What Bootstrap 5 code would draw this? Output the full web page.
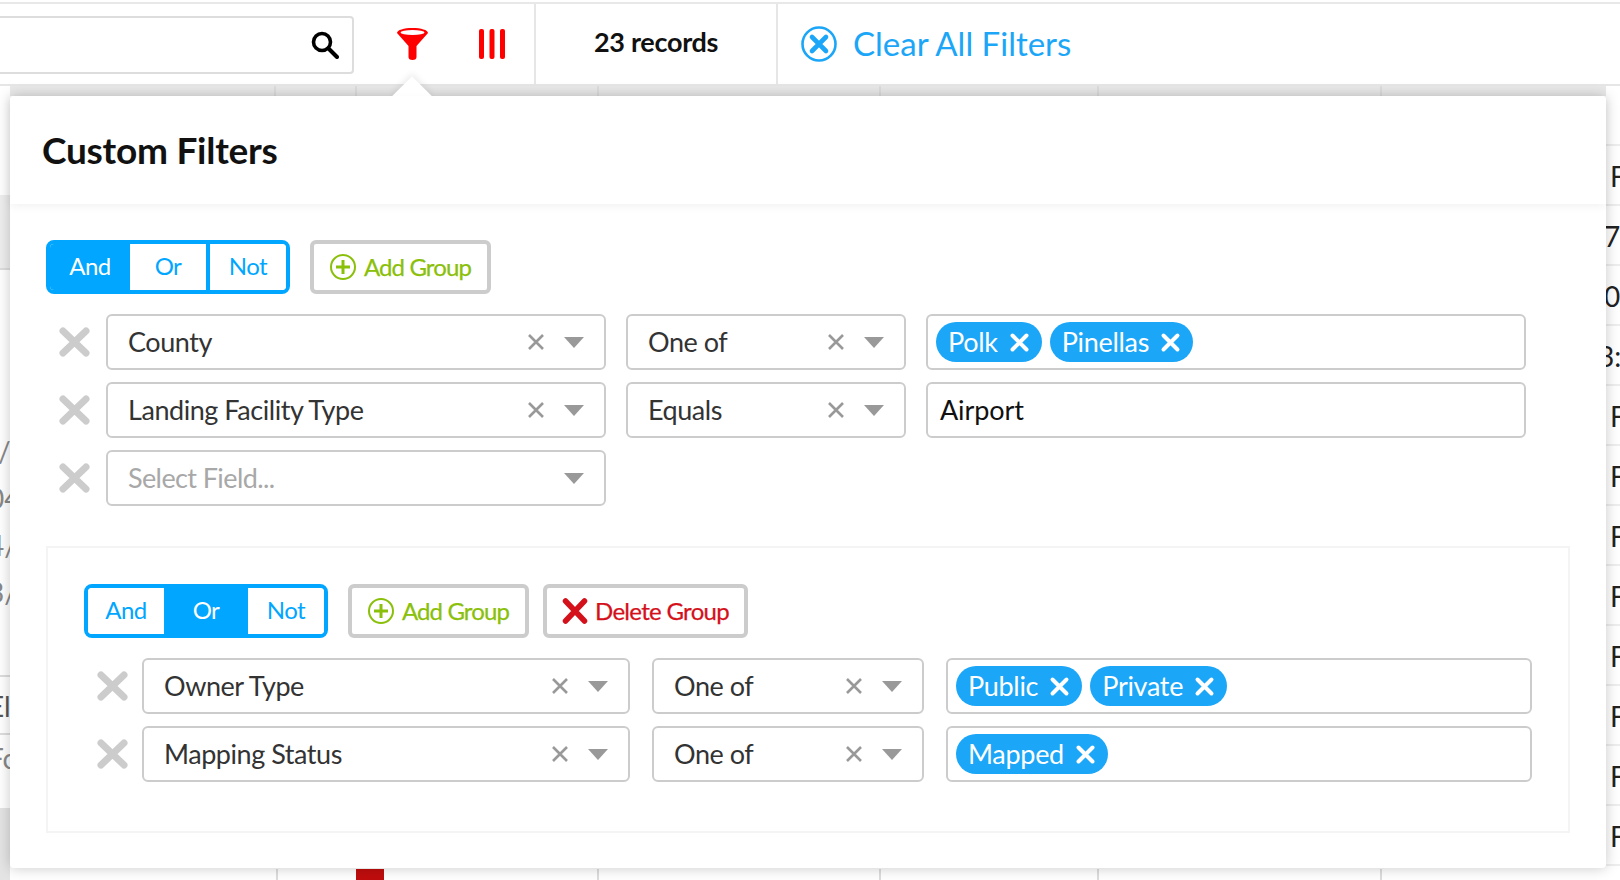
<!DOCTYPE html>
<html lang="en">
<head>
  <meta charset="UTF-8">
  <title>Custom Filters</title>
  <link href="https://cdn.jsdelivr.net/npm/bootstrap@5.3.0/dist/css/bootstrap.min.css" rel="stylesheet">
  <style>
    html, body { height: 880px; overflow: hidden; }
    body { position: relative; font-family: "Lato", "Liberation Sans", sans-serif; background: #fff; color: #333; }

    .top-rule { border-top: 2px solid #e8e8e8; margin-top: 2px; height: 2px; }
    .toolbar { height: 82px; border-bottom: 2px solid #e6e6e6; }
    .search-box { width: 354px; height: 58px; margin-top: 12px; border: 2px solid #ddd; border-left: 0; border-radius: 0 4px 4px 0; padding-right: 13px; }
    .tool-slot { width: 180px; height: 80px; padding-left: 43px; gap: 51px; }
    .rec-cell { width: 244px; height: 80px; border-left: 2px solid #e6e6e6; border-right: 2px solid #e6e6e6; padding-left: 58px; padding-bottom: 4px; font-size: 27px; font-weight: 700; color: #111; letter-spacing: -.3px; }
    .clear-link { color: #1ba6f8; font-size: 33px; padding-left: 23px; gap: 16px; }

    .behind { height: 794px; overflow: hidden; color: #888; font-size: 28px; }
    .edge-left { width: 10px; flex: none; overflow: hidden; }
    .edge-right { width: 14px; flex: none; overflow: hidden; color: #222; }
    .edge-right div { height: 60px; line-height: 60px; border-bottom: 2px solid #eee; white-space: nowrap; padding-left: 4px; }
    .edge-right .cut { display: block; margin-left: -6px; }
    .edge-right .cut-more { margin-left: -12px; }
    .left-txt { height: 47px; line-height: 47px; white-space: nowrap; }
    .left-txt span { display: block; margin-left: -12px; }
    .left-gap { border-bottom: 2px solid #ddd; background: #eee; }
    .left-line { border-bottom: 2px solid #ddd; height: 58px; line-height: 58px; white-space: nowrap; }
    .left-line span { display: block; margin-left: -12px; }
    .left-end { height: 46px; line-height: 46px; white-space: nowrap; }
    .left-end span { display: block; margin-left: -12px; }
    .mid-col { flex: 1 1 auto; }
    .tick-band { height: 10px; background: #e9e9e9; }
    .tick-foot { height: 11px; }
    .tick { width: 2px; background: #ddd; position: absolute; height: 100%; }
    .tick-row { position: relative; }
    .red-block { position: absolute; left: 346px; top: 0; width: 28px; height: 11px; background: #c00d0d; }

    .filter-panel { position: absolute; left: 10px; top: 96px; width: 1596px; height: 772px; background: #fff; border-radius: 4px; box-shadow: 0 0 14px rgba(0,0,0,.22); }
    .panel-arrow { position: absolute; left: 388px; top: -14px; width: 28px; height: 28px; background: #fff; transform: rotate(45deg); box-shadow: -2px -2px 6px rgba(0,0,0,.08); }
    .panel-head { position: relative; height: 108px; padding: 0 32px; background: #fff; box-shadow: 0 3px 8px rgba(0,0,0,.05); border-radius: 4px 4px 0 0; }
    .panel-head h2 { margin: 0; font-family: "Lato", sans-serif; font-size: 37px; font-weight: 700; color: #111; letter-spacing: -.25px; }
    .panel-body { padding: 36px; }

    .logic-group { width: 244px; height: 54px; border: 4px solid #00a6ff; border-radius: 8px; overflow: hidden; }
    .logic-group .btn { border: 0; border-radius: 0; padding: 0 0 2px; font-size: 24px; letter-spacing: -.5px; color: #00a6ff; background: #fff; flex: none; }
    .logic-group .btn.on { background: #00a6ff; color: #fff; }
    .logic-group .btn.sep { border-left: 4px solid #00a6ff; }
    .w-76 { width: 76px; }
    .w-80 { width: 80px; }
    .w-84 { width: 84px; }
    .tool-btn { height: 54px; border: 4px solid #ccc; border-radius: 6px; font-size: 24px; background: #fff; padding: 0 0 0 16px; gap: 8px; letter-spacing: -.9px; white-space: nowrap; flex: none; -webkit-text-stroke: .25px currentColor; }
    .tool-btn svg { flex: none; }
    .tool-add, .tool-add:hover { width: 181px; color: #8abf0a; background: #fff; border-color: #ccc; }
    .tool-del, .tool-del:hover { width: 205px; color: #d4111b; background: #fff; border-color: #ccc; gap: 7px; padding-left: 15px; letter-spacing: -.7px; }

    .filter-row { height: 56px; margin-bottom: 12px; }
    .row-x { flex: none; width: 31px; }
    .fld { height: 56px; border: 2px solid #ccc; border-radius: 6px; padding-left: 20px; padding-right: 20px; font-size: 27px; letter-spacing: -.45px; background: #fff; white-space: nowrap; }
    .fld .lbl { flex: 1 1 auto; }
    .fld .ph { color: #a8a8a8; letter-spacing: -.6px; }
    .caret-ico { width: 20px; height: 11px; flex: none; margin-left: 19px; }
    .clr-ico { width: 18px; height: 18px; flex: none; }
    .val { height: 56px; border: 2px solid #ccc; border-radius: 6px; padding: 0 8px; gap: 8px; font-size: 27px; color: #111; background: #fff; }
    .val.txt { padding-left: 12px; letter-spacing: -.1px; }
    .chip { height: 40px; background: #1ba6f8; color: #fff; border-radius: 20px; padding: 0 12px 0 12px; font-size: 27px; gap: 11px; letter-spacing: -.3px; }

    .w-f1 { width: 500px; flex: none; }
    .w-o1 { width: 280px; flex: none; }
    .w-v1 { width: 600px; flex: none; }
    .w-f2 { width: 488px; flex: none; }
    .w-o2 { width: 272px; flex: none; }
    .w-v2 { width: 586px; flex: none; }

    .group-box { margin-top: 40px; border: 2px solid #f4f4f4; padding: 36px 36px 37px; width: 1524px; }
    .top-rows { margin-top: 20px; padding-left: 13px; }
    .gap-fld { gap: 20px; }
    .gap-btn { gap: 14px; }
    .gap-x { gap: 16px; }
    .gap-x2 { gap: 14px; }
    .gap-fld2 { gap: 22px; }
  </style>
</head>
<body>
  <svg width="0" height="0" class="d-block">
    <defs>
      <symbol id="i-caret" viewBox="0 0 20 11"><path d="M0 0H20L10 11Z" fill="#999"/></symbol>
      <symbol id="i-clr" viewBox="0 0 18 18"><path d="M2 2L16 16M16 2L2 16" stroke="#999" stroke-width="2.6" fill="none"/></symbol>
      <symbol id="i-rowx" viewBox="0 0 31 30"><path d="M4 4L27 26M27 4L4 26" stroke="#ccc" stroke-width="7" stroke-linecap="round" fill="none"/></symbol>
      <symbol id="i-chipx" viewBox="0 0 18 18"><path d="M3 3L15 15M15 3L3 15" stroke="#fff" stroke-width="3.4" stroke-linecap="round" fill="none"/></symbol>
      <symbol id="i-plus" viewBox="0 0 26 26"><circle cx="13" cy="13" r="12" fill="none" stroke="#8abf0a" stroke-width="2"/><path d="M13 6V20M6 13H20" stroke="#8abf0a" stroke-width="3"/></symbol>
    </defs>
  </svg>

  <div class="top-rule"></div>
  <div class="toolbar d-flex">
    <div class="search-box d-flex align-items-center justify-content-end">
      <svg width="28" height="28" viewBox="0 0 28 28"><circle cx="11" cy="11" r="8.5" fill="none" stroke="#000" stroke-width="3.6"/><path d="M17.5 17.5L26 26" stroke="#000" stroke-width="4" stroke-linecap="round"/></svg>
    </div>
    <div class="tool-slot d-flex align-items-center">
      <svg width="31" height="32" viewBox="0 0 31 32"><path d="M0 5C0 2 7 0 15.5 0S31 2 31 5L19.5 18V29Q19.5 32 15.5 32T11.5 29V18Z" fill="#f00"/><ellipse cx="15.5" cy="4.5" rx="12" ry="2.4" fill="#fff"/></svg>
      <svg width="26" height="30" viewBox="0 0 26 30"><rect x="0" y="0" width="5" height="30" rx="2" fill="#f00"/><rect x="10.5" y="0" width="5" height="30" rx="2" fill="#f00"/><rect x="21" y="0" width="5" height="30" rx="2" fill="#f00"/></svg>
    </div>
    <div class="rec-cell d-flex align-items-center">23 records</div>
    <a class="clear-link d-flex align-items-center text-decoration-none" href="#">
      <svg width="36" height="36" viewBox="0 0 36 36"><circle cx="18" cy="18" r="16.5" fill="none" stroke="#1ba6f8" stroke-width="2.6"/><path d="M11 11L25 25M25 11L11 25" stroke="#1ba6f8" stroke-width="4.6" stroke-linecap="round"/></svg>
      <span>Clear All Filters</span>
    </a>
  </div>

  <div class="behind d-flex">
    <div class="edge-left">
      <div style="height:109px"></div>
      <div class="left-gap" style="height:75px"></div>
      <div style="height:158px"></div>
      <div class="left-txt"><span style="margin-left:-2px">/</span></div>
      <div class="left-txt"><span>04</span></div>
      <div class="left-txt"><span>4/</span></div>
      <div class="left-txt"><span>3/</span></div>
      <div style="height:61px;border-bottom:2px solid #ddd"></div>
      <div class="left-line"><span style="color:#555">El</span></div>
      <div class="left-end"><span>Fc</span></div>
      <div style="height:27px"></div>
      <div style="height:72px;background:#e4e4e4"></div>
    </div>
    <div class="mid-col d-flex flex-column justify-content-between">
      <div class="tick-band tick-row">
        <div class="tick" style="left:264px"></div>
        <div class="tick" style="left:345px"></div>
        <div class="tick" style="left:587px"></div>
        <div class="tick" style="left:869px"></div>
        <div class="tick" style="left:1087px"></div>
        <div class="tick" style="left:1370px"></div>
      </div>
      <div class="tick-foot tick-row">
        <div class="tick" style="left:266px"></div>
        <div class="red-block"></div>
        <div class="tick" style="left:587px"></div>
        <div class="tick" style="left:869px"></div>
        <div class="tick" style="left:1087px"></div>
        <div class="tick" style="left:1370px"></div>
      </div>
    </div>
    <div class="edge-right">
      <div></div>
      <div>F</div>
      <div><span class="cut">7</span></div>
      <div><span class="cut">0</span></div>
      <div><span class="cut cut-more">3:</span></div>
      <div>F</div>
      <div>F</div>
      <div>F</div>
      <div>F</div>
      <div>F</div>
      <div>F</div>
      <div>F</div>
      <div>F</div>
      <div>F</div>
    </div>
  </div>

  <div class="filter-panel">
    <div class="panel-arrow"></div>
    <div class="panel-head d-flex align-items-center"><h2>Custom Filters</h2></div>
    <div class="panel-body">

      <div class="d-flex gap-fld">
        <div class="logic-group d-flex">
          <button class="btn on w-80" type="button">And</button>
          <button class="btn w-76" type="button">Or</button>
          <button class="btn sep w-80" type="button">Not</button>
        </div>
        <button class="btn tool-btn tool-add d-flex align-items-center" type="button"><svg width="26" height="26"><use href="#i-plus"/></svg>Add Group</button>
      </div>

      <div class="top-rows">
        <div class="filter-row d-flex align-items-center gap-x">
          <svg class="row-x" height="30"><use href="#i-rowx"/></svg>
          <div class="d-flex gap-fld">
            <div class="fld w-f1 d-flex align-items-center"><span class="lbl">County</span><svg class="clr-ico"><use href="#i-clr"/></svg><svg class="caret-ico"><use href="#i-caret"/></svg></div>
            <div class="fld w-o1 d-flex align-items-center"><span class="lbl">One of</span><svg class="clr-ico"><use href="#i-clr"/></svg><svg class="caret-ico"><use href="#i-caret"/></svg></div>
            <div class="val w-v1 d-flex align-items-center">
              <span class="chip d-flex align-items-center">Polk<svg width="21" height="21"><use href="#i-chipx"/></svg></span>
              <span class="chip d-flex align-items-center">Pinellas<svg width="21" height="21"><use href="#i-chipx"/></svg></span>
            </div>
          </div>
        </div>
        <div class="filter-row d-flex align-items-center gap-x">
          <svg class="row-x" height="30"><use href="#i-rowx"/></svg>
          <div class="d-flex gap-fld">
            <div class="fld w-f1 d-flex align-items-center"><span class="lbl">Landing Facility Type</span><svg class="clr-ico"><use href="#i-clr"/></svg><svg class="caret-ico"><use href="#i-caret"/></svg></div>
            <div class="fld w-o1 d-flex align-items-center"><span class="lbl">Equals</span><svg class="clr-ico"><use href="#i-clr"/></svg><svg class="caret-ico"><use href="#i-caret"/></svg></div>
            <div class="val txt w-v1 d-flex align-items-center">Airport</div>
          </div>
        </div>
        <div class="filter-row d-flex align-items-center gap-x">
          <svg class="row-x" height="30"><use href="#i-rowx"/></svg>
          <div class="fld w-f1 d-flex align-items-center"><span class="lbl ph">Select Field...</span><svg class="caret-ico"><use href="#i-caret"/></svg></div>
        </div>
      </div>

      <div class="group-box">
        <div class="d-flex gap-fld">
          <div class="logic-group d-flex">
            <button class="btn w-76" type="button">And</button>
            <button class="btn on w-84" type="button">Or</button>
            <button class="btn w-76" type="button">Not</button>
          </div>
          <div class="d-flex gap-btn">
            <button class="btn tool-btn tool-add d-flex align-items-center" type="button"><svg width="26" height="26"><use href="#i-plus"/></svg>Add Group</button>
            <button class="btn tool-btn tool-del d-flex align-items-center" type="button"><svg width="26" height="26" viewBox="0 0 26 26"><path d="M3.5 3L22.5 23M22.5 3L3.5 23" stroke="#d4111b" stroke-width="5.5" stroke-linecap="round" fill="none"/></svg>Delete Group</button>
          </div>
        </div>
        <div class="top-rows">
          <div class="filter-row d-flex align-items-center gap-x2">
            <svg class="row-x" height="30"><use href="#i-rowx"/></svg>
            <div class="d-flex gap-fld2">
              <div class="fld w-f2 d-flex align-items-center"><span class="lbl">Owner Type</span><svg class="clr-ico"><use href="#i-clr"/></svg><svg class="caret-ico"><use href="#i-caret"/></svg></div>
              <div class="fld w-o2 d-flex align-items-center"><span class="lbl">One of</span><svg class="clr-ico"><use href="#i-clr"/></svg><svg class="caret-ico"><use href="#i-caret"/></svg></div>
              <div class="val w-v2 d-flex align-items-center">
                <span class="chip d-flex align-items-center">Public<svg width="21" height="21"><use href="#i-chipx"/></svg></span>
                <span class="chip d-flex align-items-center">Private<svg width="21" height="21"><use href="#i-chipx"/></svg></span>
              </div>
            </div>
          </div>
          <div class="filter-row d-flex align-items-center gap-x2">
            <svg class="row-x" height="30"><use href="#i-rowx"/></svg>
            <div class="d-flex gap-fld2">
              <div class="fld w-f2 d-flex align-items-center"><span class="lbl">Mapping Status</span><svg class="clr-ico"><use href="#i-clr"/></svg><svg class="caret-ico"><use href="#i-caret"/></svg></div>
              <div class="fld w-o2 d-flex align-items-center"><span class="lbl">One of</span><svg class="clr-ico"><use href="#i-clr"/></svg><svg class="caret-ico"><use href="#i-caret"/></svg></div>
              <div class="val w-v2 d-flex align-items-center">
                <span class="chip d-flex align-items-center">Mapped<svg width="21" height="21"><use href="#i-chipx"/></svg></span>
              </div>
            </div>
          </div>
        </div>
      </div>

    </div>
  </div>

  <script src="https://cdn.jsdelivr.net/npm/bootstrap@5.3.0/dist/js/bootstrap.bundle.min.js"></script>
</body>
</html>
